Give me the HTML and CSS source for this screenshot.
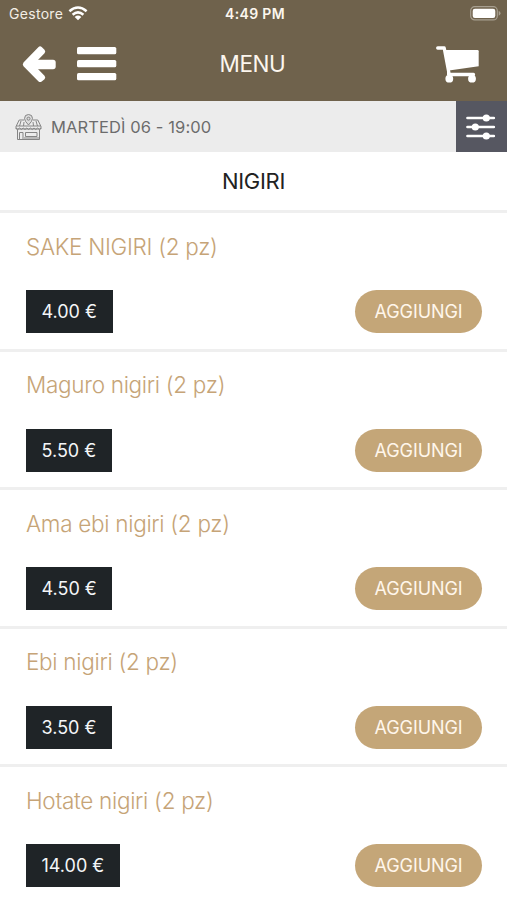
FILE: index.html
```html
<!DOCTYPE html>
<html lang="it">
<head>
<meta charset="utf-8">
<title>Menu</title>
<link rel="stylesheet" href="styles.css">
</head>
<body>
<header class="header">
  <div class="status">
    <div class="carrier"><span>Gestore</span>
      <svg width="20" height="15" viewBox="0 0 20 15" fill="none" stroke="#fff" stroke-width="2.5"><path d="M1.4 5.2Q10-2.3 18.6 5.2M4.6 8.7Q10 4 15.4 8.7"/><path d="M6.7 10.9Q10 8.2 13.3 10.9L10 14.2Z" fill="#fff" stroke="none"/></svg>
    </div>
    <span class="clock">4:49 PM</span>
    <svg class="battery" width="31" height="15" viewBox="0 0 31 15"><rect x=".7" y=".7" width="26.6" height="13.2" rx="4" fill="none" stroke="#a79f90" stroke-width="1.2"/><rect x="2.7" y="2.7" width="22.6" height="9.2" rx="2.2" fill="#fff"/><path d="M28.7 5Q30.5 5.5 30.5 7.3T28.7 9.8Z" fill="#a79f90"/></svg>
  </div>
  <div class="nav">
    <div class="nav-left">
      <svg width="34" height="38" viewBox="0 0 34 38" fill="#fff"><path d="M12 14.800H31Q33.700 14.800 33.700 17.500V21.500Q33.700 24.200 31 24.200H12Z"/><path d="M19.700 2L22.500 4.800Q24 6.500 22.500 8.200L15 16V23L22.500 30.800Q24 32.500 22.500 34.200L19.700 36.500Q18 37.800 16.300 36.200L1.500 21.200Q0 19.500 1.500 17.500L16.300 2.200Q18 .6 19.700 2Z"/></svg>
      <svg width="40" height="34" viewBox="0 0 40 34" fill="#fff"><rect width="39.300" height="7.300" rx="1.600"/><rect y="13" width="39.300" height="7.300" rx="1.600"/><rect y="26" width="39.300" height="7.300" rx="1.600"/></svg>
    </div>
    <h1 class="title">MENU</h1>
    <svg class="cart" width="44" height="38" viewBox="0 0 44 38"><path d="M1.700 2H8.200L13.200 28.500H37.500" fill="none" stroke="#fff" stroke-width="3.300" stroke-linecap="round" stroke-linejoin="round"/><path d="M9 4H41.500Q42.700 4 42.700 5.200V20.200L13 24.500Z" fill="#fff"/><circle cx="13.300" cy="32.700" r="3.900" fill="#fff"/><circle cx="36" cy="32.700" r="3.900" fill="#fff"/><path d="M12.500 24V29" stroke="#fff" stroke-width="3"/></svg>
  </div>
</header>
<div class="booking">
  <svg class="shop" width="27" height="27" viewBox="0 0 27 27" fill="none" stroke="#858585" stroke-width="1"><path d="M9 6H4.200L1 12.500V15H26V12.500L22.800 6H18M2.500 15.500V25.500H24.500V15.500M1 12H26M1 14Q2.800 17 4.600 14Q6.400 17 8.200 14Q10 17 11.800 14Q13.600 17 15.400 14Q17.200 17 19 14Q20.800 17 22.600 14Q24.400 17 26 14M4.500 25V18.500H8V25M10.500 18.500H22V22.500H10.500ZM9 24H24M6 7L4.500 12M9 8L8.500 12M18 8L18.500 12M21 7L22.500 12"/><path d="M13.500 11Q9.500 7 9.500 4.500A4 4 0 0 1 17.500 4.500Q17.500 7 13.500 11Z" fill="#ddd"/><circle cx="13.500" cy="4.700" r="1.500"/></svg>
  <span class="date">MARTEDÌ 06 - 19:00</span>
  <div class="filter"><svg width="30" height="26" viewBox="0 0 30 26" stroke="#fff" stroke-width="2.700" stroke-linecap="round" fill="#fff"><path d="M1.500 4H27.800M1.500 13H27.800M1.500 22H27.800"/><g stroke="none"><circle cx="20.300" cy="4" r="3.600"/><circle cx="9.300" cy="13" r="3.600"/><circle cx="20.300" cy="22" r="3.600"/></g></svg></div>
</div>
<h2 class="category">NIGIRI</h2>
<main>
  <section class="item"><h3 class="name">SAKE NIGIRI (2 pz)</h3><div class="actions"><span class="price">4.00 €</span><button class="add">AGGIUNGI</button></div></section>
  <section class="item"><h3 class="name">Maguro nigiri (2 pz)</h3><div class="actions"><span class="price">5.50 €</span><button class="add">AGGIUNGI</button></div></section>
  <section class="item"><h3 class="name">Ama ebi nigiri (2 pz)</h3><div class="actions"><span class="price">4.50 €</span><button class="add">AGGIUNGI</button></div></section>
  <section class="item"><h3 class="name">Ebi nigiri (2 pz)</h3><div class="actions"><span class="price">3.50 €</span><button class="add">AGGIUNGI</button></div></section>
  <section class="item"><h3 class="name">Hotate nigiri (2 pz)</h3><div class="actions"><span class="price">14.00 €</span><button class="add">AGGIUNGI</button></div></section>
</main>
</body>
</html>
```
FILE: styles.css
```css
* { box-sizing: border-box; }
body { margin: 0; height: 900px; overflow: hidden; background: #fff; font-family: Inter, "Liberation Sans", sans-serif; }
h1, h2, h3 { margin: 0; font-weight: 400; }
svg { display: block; flex: none; }
.header { height: 101px; background: #6f624c; color: #fff; }
.status { height: 27px; display: grid; grid-template-columns: 1fr auto 1fr; align-items: center; padding: 0 6px 0 9px; font-size: 14px; }
.carrier { display: flex; align-items: center; gap: 5px; letter-spacing: .3px; color: #f3eee6; }
.clock { font-weight: 600; font-size: 14px; letter-spacing: .35px; color: #fbf6ee; }
.battery { justify-self: end; }
.nav { height: 74px; display: grid; grid-template-columns: 1fr auto 1fr; align-items: center; padding: 0 27px 0 22px; }
.nav-left { display: flex; align-items: center; gap: 21px; }
.title { margin: 0 -1.5px 0 1.5px; padding-bottom: 2px; font-size: 22.5px; font-weight: 370; letter-spacing: -.4px; color: #fcf6ee; }
.cart { justify-self: end; margin-top: 2px; }
.booking { height: 51px; display: flex; align-items: center; padding-left: 15px; background: #ececec; }
.shop { margin-top: 1px; }
.date { margin-left: 9px; font-size: 16.5px; color: #6c6c6c; letter-spacing: .1px; }
.filter { width: 51px; height: 51px; margin-left: auto; padding-right: 2px; display: flex; align-items: center; justify-content: center; background: #565761; }
.category { height: 58px; line-height: 58px; text-align: center; font-size: 22px; color: #222; letter-spacing: -.3px; }
.item { height: 138.5px; border-top: 3px solid #efefef; padding: 17.5px 25px 0 26px; }
.name { height: 31px; line-height: 31px; font-size: 22.5px; font-weight: 350; letter-spacing: -.3px; color: #c6a477; white-space: nowrap; }
.actions { margin-top: 28.5px; display: flex; align-items: center; justify-content: space-between; }
.price { height: 43px; line-height: 43px; padding: 0 15.5px; background: #1f2427; color: #f4f6f8; font-size: 18px; white-space: nowrap; }
.add { width: 127px; height: 43px; padding: 0; border: 0; border-radius: 22px; background: #c4a678; color: #fff6eb; font: 380 18px Inter, "Liberation Sans", sans-serif; letter-spacing: -.1px; }
```
